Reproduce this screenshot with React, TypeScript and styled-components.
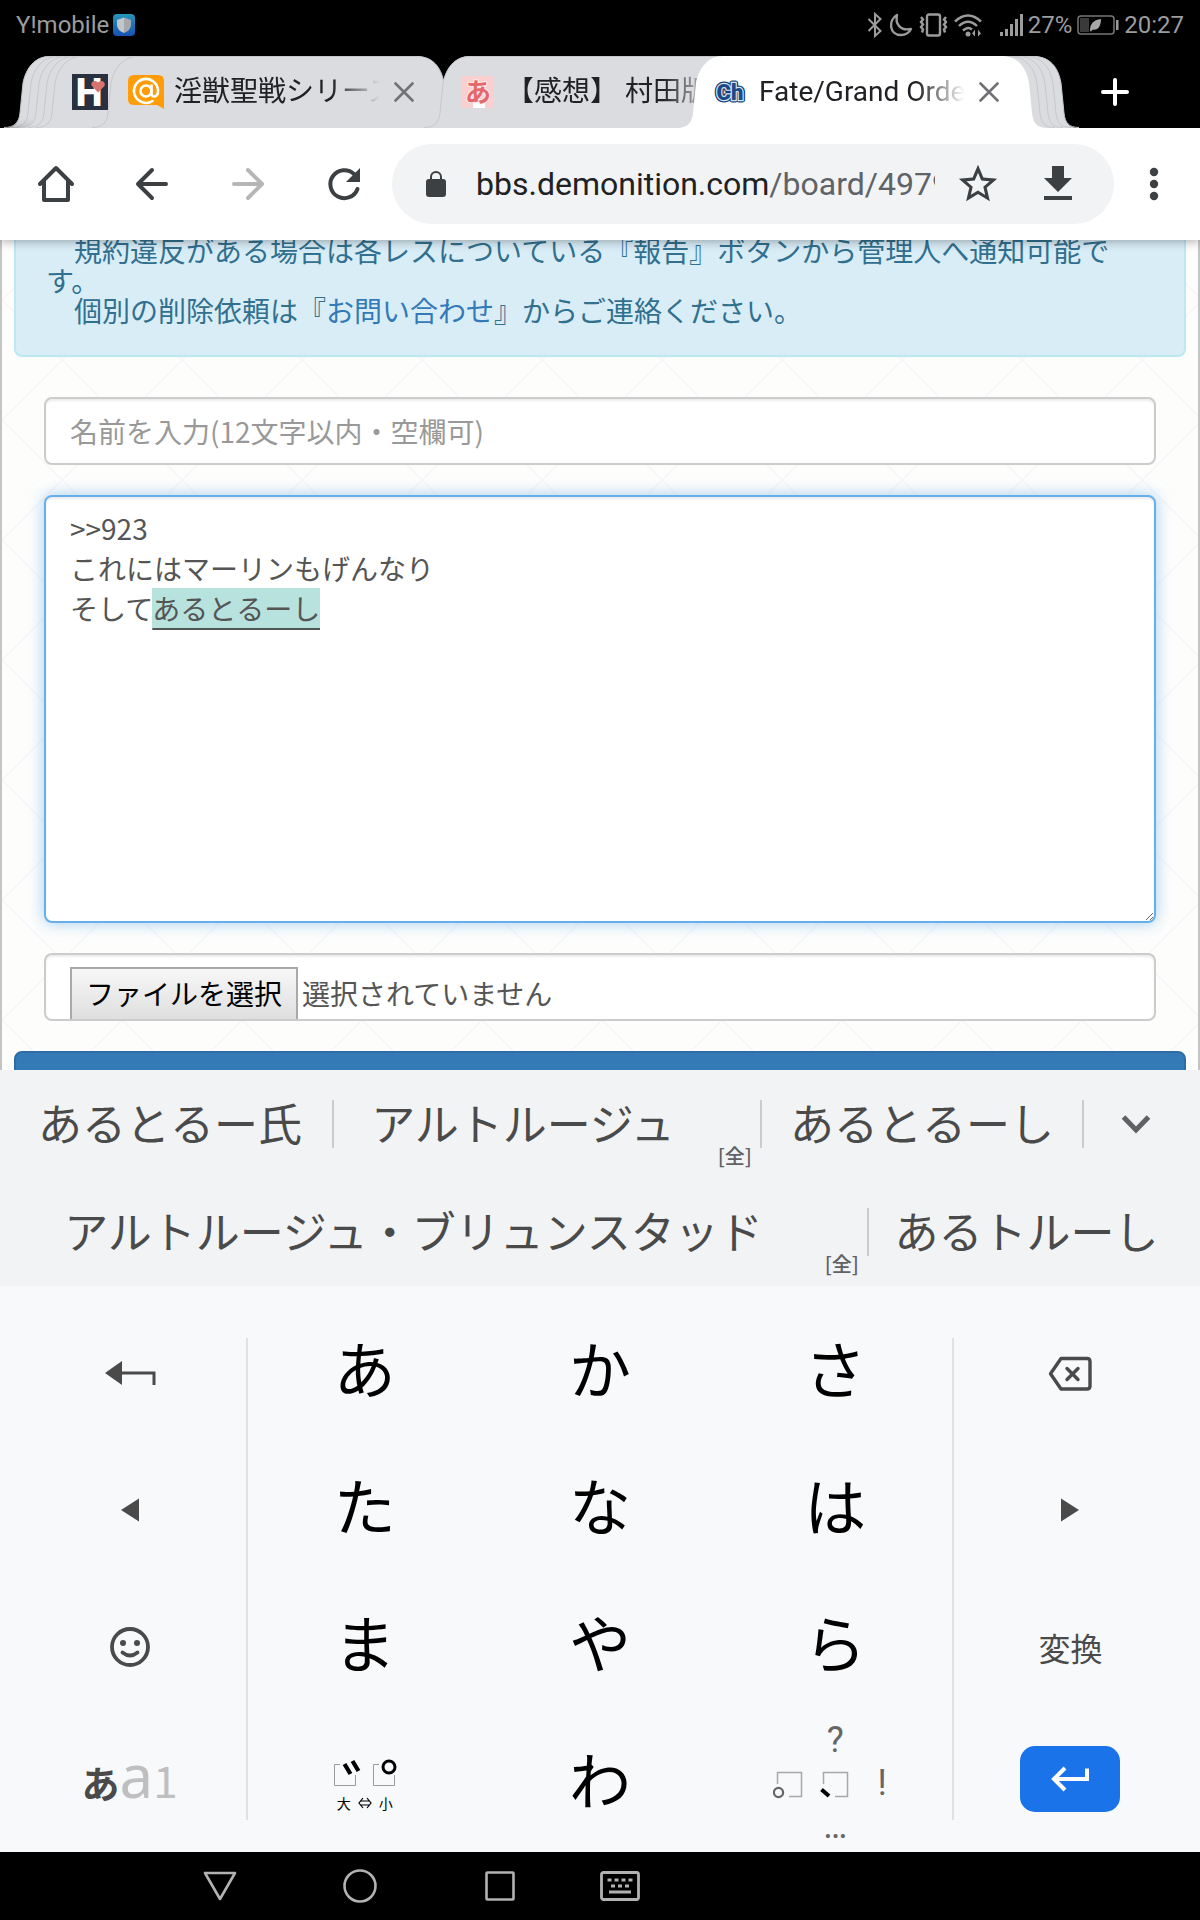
import React, { useEffect, useRef } from "react";
import styled, { createGlobalStyle, css } from "styled-components";

const GlobalStyle = createGlobalStyle`
  * { box-sizing: border-box; }
  body { margin: 0; background: #000; }
  button { border: 0; padding: 0; margin: 0; background: none; font: inherit; color: inherit; cursor: pointer; }
  svg { display: block; flex: none; }
`;

const ui = `Roboto, "Noto Sans CJK JP", sans-serif`;
const jp = `"Noto Sans CJK JP", sans-serif`;

const Screen = styled.div`
  display: flex;
  flex-direction: column;
  height: 100vh;
  overflow: hidden;
  font-family: ${ui};
`;

/* ---------- status bar ---------- */

const StatusBar = styled.header`
  display: flex;
  align-items: center;
  justify-content: space-between;
  flex: none;
  height: 56px;
  padding: 0 16px 6px;
  background: #000;
  color: #9c9c9c;
  font-size: 24px;
  line-height: 28px;
`;

const StatusGroup = styled.div<{ $gap: number }>`
  display: flex;
  align-items: center;
  gap: ${(p) => p.$gap}px;
`;

/* ---------- tab strip ---------- */

const TabStrip = styled.nav`
  display: flex;
  flex: none;
  height: 72px;
  padding-left: 4px;
  background: #000;
  overflow: hidden;
`;

const TabBox = styled.div<{ $step: number; $layer: number }>`
  position: relative;
  z-index: ${(p) => p.$layer};
  display: flex;
  align-items: center;
  flex: none;
  width: 370px;
  margin-right: ${(p) => p.$step - 370}px;
  padding: 0 38px 0 36px;
`;

const TabShape = styled.span<{ $active?: boolean }>`
  position: absolute;
  inset: 0;
  z-index: -1;
  display: flex;
  color: ${(p) => (p.$active ? "#fff" : "#dbdce0")};
`;

const TabFill = styled.span<{ $active?: boolean }>`
  flex: 1;
  background: currentColor;
  border-top: 1px solid ${(p) => (p.$active ? "#fff" : "#c6c8cb")};
`;

const TabTitle = styled.button`
  display: flex;
  align-items: center;
  flex: 1;
  min-width: 0;
  height: 72px;
  gap: 10px;
  color: #202124;
  font-size: 28px;
  line-height: 40px;
  text-align: left;
`;

const TabText = styled.span`
  flex: 1;
  overflow: hidden;
  white-space: pre;
  mask-image: linear-gradient(90deg, #000 75%, transparent 98%);
`;

const CloseButton = styled.button`
  display: flex;
  align-items: center;
  justify-content: center;
  width: 40px;
  height: 48px;
`;

const NewTab = styled.button<{ $layer: number }>`
  position: relative;
  z-index: ${(p) => p.$layer};
  display: flex;
  align-items: center;
  justify-content: center;
  flex: none;
  width: 72px;
  height: 72px;
`;

const LeftCap = ({ active }: { active?: boolean }) => (
  <svg width="46" height="72" viewBox="0 0 46 72">
    <path d="M0 72C10 72 15 67 16 57L19 27C22 12 31 0 46 0V72Z" fill="currentColor" />
    {!active && <path d="M0 71.5C10 71.5 15 67 16 57L19 27C22 12 31 .5 46 .5" fill="none" stroke="#c6c8cc" />}
  </svg>
);

const RightCap = ({ active }: { active?: boolean }) => (
  <svg width="46" height="72" viewBox="0 0 46 72">
    <path d="M46 72C36 72 32 67 31 57L28 27C25 10 16 0 0 0V72Z" fill="currentColor" />
    {!active && <path d="M46 71.5C36 71.5 32 67 31 57L28 27C25 10 16 .5 0 .5" fill="none" stroke="#c6c8cc" />}
  </svg>
);

type TabProps = {
  step: number;
  layer: number;
  active?: boolean;
  icon?: React.ReactNode;
  title?: string;
  closable?: boolean;
};

const Tab = ({ step, layer, active, icon, title, closable }: TabProps) => (
  <TabBox $step={step} $layer={layer}>
    <TabShape $active={active}>
      <LeftCap active={active} />
      <TabFill $active={active} />
      <RightCap active={active} />
    </TabShape>
    {icon && (
      <TabTitle type="button">
        {icon}
        {title && <TabText>{title}</TabText>}
      </TabTitle>
    )}
    {closable && (
      <CloseButton type="button" aria-label="タブを閉じる">
        <svg width="20" height="20" viewBox="0 0 20 20" fill="none" stroke="#707276" strokeWidth="2.6" strokeLinecap="round">
          <path d="M1.5 1.5l17 17M18.5 1.5l-17 17" />
        </svg>
      </CloseButton>
    )}
  </TabBox>
);

const HIcon = () => (
  <svg width="36" height="36" viewBox="0 0 36 36">
    <rect width="36" height="36" fill="#29303f" />
    <text x="17" y="31.5" textAnchor="middle" fontFamily="Roboto, sans-serif" fontWeight="900" fontSize="38" fill="#fff">H</text>
    <path d="M26 18.5l-6-6.5c-2-3 1.500-7.500 6-3.500 4.500-4 8 .5 6.500 3.500z" fill="#d9736f" />
  </svg>
);

const AtIcon = () => (
  <svg width="36" height="34" viewBox="0 0 36 34">
    <path d="M6 0H30q6 0 6 6V34L29 30H6q-6 0-6-6V6Q0 0 6 0Z" fill="#ff9c08" />
    <g fill="none" stroke="#fff" strokeWidth="2.6" strokeLinecap="round">
      <circle cx="18" cy="16" r="5.5" />
      <path d="M23.5 10.500V18.500c0 4.500 6.500 4 6.500-2.500A12 12 0 1 0 24.500 26" />
    </g>
  </svg>
);

const KanaIcon = () => (
  <svg width="36" height="36" viewBox="0 0 36 36">
    <rect x="2" y="2" width="32" height="32" fill="#f9cfcf" />
    <path d="M13 34V25h12v9z" fill="#fff" />
    <text x="18" y="28" textAnchor="middle" fontFamily="Noto Sans CJK JP, sans-serif" fontWeight="700" fontSize="26" fill="#e4676b" stroke="#fdeaea" strokeWidth="2" paintOrder="stroke">あ</text>
  </svg>
);

const ChIcon = () => (
  <svg width="36" height="28" viewBox="0 0 36 28">
    <text x="17" y="22" textAnchor="middle" fontFamily="Roboto, sans-serif" fontWeight="900" fontSize="22" fill="#123f78" stroke="#123f78" strokeWidth="5" strokeLinejoin="round" paintOrder="stroke">Ch</text>
    <text x="17" y="22" textAnchor="middle" fontFamily="Roboto, sans-serif" fontWeight="900" fontSize="22" fill="#1b4a86" stroke="#d5e6f7" strokeWidth="2.4" paintOrder="stroke">Ch</text>
  </svg>
);

/* ---------- browser toolbar ---------- */

const Toolbar = styled.div`
  position: relative;
  z-index: 2;
  display: flex;
  align-items: center;
  flex: none;
  height: 112px;
  padding: 0 6px 0 8px;
  background: #fff;
  box-shadow: 0 1px 10px rgba(0, 0, 0, 0.35);
`;

const ToolButton = styled.button<{ $width: number }>`
  display: flex;
  align-items: center;
  justify-content: center;
  flex: none;
  width: ${(p) => p.$width}px;
  height: 80px;
  color: #3c4043;
`;

const AddressBar = styled.div`
  display: flex;
  align-items: center;
  flex: 1;
  min-width: 0;
  height: 80px;
  padding: 0 16px 0 34px;
  border-radius: 40px;
  background: #f1f3f4;
`;

const Address = styled.div`
  display: flex;
  align-items: center;
  flex: 1;
  gap: 30px;
  min-width: 0;
  color: #3c4043;
`;

const Url = styled.span`
  flex: 1;
  overflow: hidden;
  margin-right: 3px;
  color: #5f6368;
  font-size: 32px;
  line-height: 44px;
  white-space: nowrap;

  b {
    color: #202124;
    font-weight: 400;
  }
`;

/* ---------- page ---------- */

const Page = styled.main`
  flex: 1;
  min-height: 0;
  overflow: hidden;
  padding: 0 12px;
  border: solid #c4c4c4;
  border-width: 0 2px;
  background-color: #fdfdfc;
  background-image: linear-gradient(45deg, transparent 49.5%, #f8f8fa 49.5% 50.5%, transparent 50.5%),
    linear-gradient(-45deg, transparent 49.5%, #f8f8fa 49.5% 50.5%, transparent 50.5%);
  background-size: 120px 120px;
  background-position: 0 60px;
  font-family: ${jp};
  font-size: 28px;
`;

const Notice = styled.p`
  margin: -37px 0 40px;
  padding: 30px;
  border: 2px solid #bce8f1;
  border-radius: 8px;
  background: #d9edf7;
  color: #31708f;
  line-height: 30px;

  a {
    color: #337ab7;
    text-decoration: none;
  }
`;

const Form = styled.form`
  display: flex;
  flex-direction: column;
  gap: 30px;
`;

const control = css`
  display: block;
  margin: 0 30px;
  padding: 12px 24px;
  border: 2px solid #ccc;
  border-radius: 8px;
  background: #fff;
  box-shadow: inset 0 2px 2px rgba(0, 0, 0, 0.075);
  color: #555;
  font-family: inherit;
  font-size: 28px;
  line-height: 40px;
  outline: 0;
`;

const NameInput = styled.input`
  ${control}
  height: 68px;

  &::placeholder {
    color: #999;
    opacity: 1;
  }
`;

const Comment = styled.textarea`
  ${control}
  height: 428px;
  padding-top: 11px;
  border-color: #66afe9;
  box-shadow: inset 0 2px 2px rgba(0, 0, 0, 0.075), 0 0 16px rgba(102, 175, 233, 0.6);
  caret-color: transparent;

  &::selection {
    background: rgba(183, 226, 221, 0.996);
    color: #555;
    text-decoration: underline 2px #4f5554;
    text-underline-offset: 8px;
  }
`;

const FileField = styled.div`
  ${control}
  display: flex;
  align-items: flex-start;
  gap: 4px;
  height: 68px;
  overflow: hidden;
`;

const HiddenFile = styled.input`
  position: absolute;
  width: 1px;
  height: 1px;
  opacity: 0;
`;

const FileButton = styled.label`
  flex: none;
  padding: 4px 14px 12px;
  border: 2px solid #a9a9a9;
  background: linear-gradient(#f7f7f7, #dcdcdc);
  color: #000;
`;

const FileStatus = styled.span`
  padding: 6px 0;
`;

const Submit = styled.button`
  height: 68px;
  border: 2px solid #2e6da4;
  border-radius: 8px;
  background: #337ab7;
  color: #fff;
`;

/* ---------- candidates ---------- */

const Candidates = styled.section`
  flex: none;
  background: #f1f3f5;
  color: #4a4a4a;
  font-family: ${jp};
  font-size: 44px;
  line-height: 64px;
`;

const CandidateRow = styled.div<{ $end: number }>`
  display: flex;
  align-items: center;
  height: 108px;
  padding: 0 ${(p) => p.$end}px 0 8px;
`;

const Candidate = styled.button<{ $grow: number }>`
  display: flex;
  align-items: center;
  flex: ${(p) => p.$grow} 1 0;
  min-width: 0;
  height: 108px;
  padding-bottom: 4px;
  white-space: nowrap;
`;

const CandidateText = styled.span`
  flex: 1;
  text-align: center;
`;

const WidthTag = styled.small`
  align-self: flex-end;
  width: 48px;
  padding: 0 8px 4px 0;
  font-size: 20px;
  font-weight: 500;
  line-height: 28px;
  text-align: right;
  color: #606164;
`;

const Bar = styled.i`
  flex: none;
  width: 2px;
  height: 48px;
  background: #c9cbcd;
`;

const Expand = styled.button`
  display: flex;
  align-items: center;
  justify-content: center;
  flex: 104 1 0;
  height: 108px;
`;

/* ---------- keyboard ---------- */

const Keyboard = styled.section`
  display: flex;
  flex: none;
  padding: 18px 12px 0;
  background: #f8f9fb;
  color: #4a4a4a;
  font-family: ${jp};
`;

const KeyColumn = styled.div`
  flex: 1;
  min-width: 0;
`;

const KeyGrid = styled.div`
  display: grid;
  grid-template-columns: repeat(3, 1fr);
  flex: 3;
  min-width: 0;
`;

const KeyDivider = styled.i`
  flex: none;
  width: 2px;
  margin: 34px -1px 32px;
  background: #dfe1e4;
`;

const Key = styled.button`
  display: flex;
  flex-direction: column;
  align-items: center;
  justify-content: center;
  width: 100%;
  height: 137px;
  font-size: 32px;
  line-height: 48px;
`;

const KanaKey = styled(Key)`
  padding-bottom: 12px;
  color: #000;
  font-size: 62px;
  line-height: 88px;
`;

const RaisedKey = styled(Key)`
  padding-bottom: 10px;
`;

const EnterFace = styled.span`
  display: flex;
  align-items: center;
  justify-content: center;
  width: 100px;
  height: 66px;
  border-radius: 15px;
  background: #1a73e8;
`;

const ModeLabel = styled.span`
  display: flex;
  align-items: baseline;
  color: #bfbfbf;
  font-size: 44px;
  line-height: 60px;

  b {
    color: #4a4a4a;
    font-size: 38px;
  }

  span {
    font-family: "Noto Sans", sans-serif;
    font-size: 60px;
  }
`;

const SizeHint = styled.span`
  display: flex;
  align-items: center;
  gap: 7px;
  margin-top: 6px;
  color: #000;
  font-size: 14px;
  line-height: 20px;
`;

const MarkKey = styled(Key)`
  padding-top: 4px;
`;

const PunctGrid = styled.span`
  display: grid;
  grid-template-columns: repeat(3, 47px);
  grid-auto-rows: 43px;
  align-items: center;
  justify-items: center;
  color: #666;
  font-family: ${ui};
  font-size: 36px;
  line-height: 43px;
`;

/* ---------- navigation bar ---------- */

const NavBar = styled.footer`
  display: flex;
  align-items: center;
  flex: none;
  height: 68px;
  padding-left: 12.5%;
  background: #000;
`;

const NavButton = styled.button<{ $width: number }>`
  display: flex;
  align-items: center;
  justify-content: center;
  width: ${(p) => p.$width}px;
  height: 68px;
  color: #b2b2b2;
`;

const StatusIcons = () => (
  <StatusGroup $gap={6}>
    <svg width="16" height="26" viewBox="0 0 16 26" fill="none" stroke="currentColor" strokeWidth="2">
      <path d="M1.5 7l12 12L8 24V2l5.500 5L1.500 19" />
    </svg>
    <svg width="24" height="26" viewBox="0 0 24 26" fill="none" stroke="currentColor" strokeWidth="2.4" strokeLinejoin="round">
      <path d="M8 3C-1 8 0 23 12 23c5 0 8-2 10-6C11 19 6 12 8 3Z" />
    </svg>
    <svg width="29" height="26" viewBox="0 0 29 26" fill="none" stroke="currentColor" strokeWidth="2.4">
      <rect x="8" y="2.5" width="13" height="21" rx="2" />
      <path d="M2 5l2 2.500-2 2.500 2 2.500-2 2.500 2 2.500-1 3M27 5l-2 2.500 2 2.500-2 2.500 2 2.500-2 2.500 1 3" />
    </svg>
    <svg width="28" height="26" viewBox="0 0 28 26" fill="none" stroke="currentColor" strokeWidth="2.4">
      <path d="M1 9.500Q14-2.500 27 9.500M5 14q9-8.500 18 0M9 18.500q5-4.500 9-1" />
      <circle cx="14" cy="22" r="2.5" fill="currentColor" stroke="none" />
      <path d="M18 21.500l3-4v7zM27 21.500l-3-4v7z" fill="currentColor" stroke="none" />
    </svg>
  </StatusGroup>
);

const App = () => {
  const comment = useRef<HTMLTextAreaElement>(null);
  const text = ">>923\nこれにはマーリンもげんなり\nそしてあるとるーし";

  // The uncommitted part of the input stays selected while candidates show.
  useEffect(() => {
    const el = comment.current;
    if (!el) return;
    el.focus({ preventScroll: true });
    el.setSelectionRange(text.length - 6, text.length);
  }, []);

  return (
    <Screen>
      <GlobalStyle />
      <StatusBar>
        <StatusGroup $gap={4}>
          Y!mobile
          <svg width="22" height="22" viewBox="0 0 22 22">
            <defs>
              <linearGradient id="shield" x2="0" y2="1">
                <stop stopColor="#2795b8" />
                <stop offset="1" stopColor="#1552b4" />
              </linearGradient>
            </defs>
            <rect width="22" height="22" rx="4" fill="url(#shield)" />
            <path d="M11 3.500l7 2.500v5q0 5-7 8z" fill="#a5a9ae" />
            <path d="M11 3.500L4 6v5q0 5 7 8z" fill="#c3c7ca" />
          </svg>
        </StatusGroup>
        <StatusGroup $gap={5}>
          <StatusIcons />
          <svg width="36" height="26" viewBox="0 0 36 26" fill="currentColor">
            <path d="M13 20h3v4h-3zM18 17h3v7h-3zM23 12h3v12h-3zM28 7h3v17h-3zM33 2h3v22h-3z" />
          </svg>
          <span>27%</span>
          <svg width="42" height="22" viewBox="0 0 42 22">
            <rect x="1" y="2" width="36" height="18" rx="3" fill="none" stroke="#777" strokeWidth="1.5" />
            <rect x="3" y="4" width="9" height="14" fill="#3a3a3a" />
            <rect x="39" y="6" width="2.5" height="10" fill="#9c9c9c" />
            <path d="M13 17C13 10 16 6 24 5c0 7-3 12-9 10.500L22 8 14 17.500Z" fill="#a8a8a8" />
          </svg>
          <span>20:27</span>
        </StatusGroup>
      </StatusBar>

      <TabStrip>
        <Tab step={8} layer={1} />
        <Tab step={8} layer={2} />
        <Tab step={8} layer={3} />
        <Tab step={8} layer={4} />
        <Tab step={56} layer={5} icon={<HIcon />} />
        <Tab step={332} layer={6} icon={<AtIcon />} title="淫獣聖戦シリーズ" closable />
        <Tab step={253} layer={7} icon={<KanaIcon />} title="【感想】 村田版" closable />
        <Tab step={8} layer={12} active icon={<ChIcon />} title="Fate/Grand Order" closable />
        <Tab step={8} layer={11} />
        <Tab step={8} layer={10} />
        <Tab step={8} layer={9} />
        <Tab step={370} layer={8} />
        <NewTab type="button" aria-label="新しいタブ" $layer={12}>
          <svg width="28" height="28" viewBox="0 0 28 28" stroke="#fff" strokeWidth="4" strokeLinecap="round">
            <path d="M14 2v24M2 14h24" />
          </svg>
        </NewTab>
      </TabStrip>

      <Toolbar>
        <ToolButton type="button" $width={96} aria-label="ホーム">
          <svg width="40" height="40" viewBox="0 0 40 40" fill="none" stroke="currentColor" strokeWidth="4" strokeLinejoin="round" strokeLinecap="round">
            <path d="M4 20L20 4l16 16M8 17v19h24V17" />
          </svg>
        </ToolButton>
        <ToolButton type="button" $width={96} aria-label="戻る">
          <svg width="40" height="40" viewBox="0 0 40 40" fill="none" stroke="currentColor" strokeWidth="4" strokeLinejoin="round" strokeLinecap="round">
            <path d="M20 6L6 20l14 14M6 20h28" />
          </svg>
        </ToolButton>
        <ToolButton type="button" $width={96} aria-label="進む" disabled>
          <svg width="40" height="40" viewBox="0 0 40 40" fill="none" stroke="#b4b6b8" strokeWidth="4" strokeLinejoin="round" strokeLinecap="round">
            <path d="M20 6l14 14-14 14M34 20H6" />
          </svg>
        </ToolButton>
        <ToolButton type="button" $width={96} aria-label="再読み込み">
          <svg width="40" height="40" viewBox="0 0 40 40">
            <path d="M33.5 25A14 14 0 1 1 30 10" fill="none" stroke="currentColor" strokeWidth="4" strokeLinecap="round" />
            <path d="M36 4v14H22z" fill="currentColor" />
          </svg>
        </ToolButton>
        <AddressBar>
          <Address>
            <svg width="20" height="26" viewBox="0 0 20 26">
              <rect y="8" width="20" height="18" rx="3" fill="currentColor" />
              <path d="M5 9V6a5 5 0 0 1 10 0v3" fill="none" stroke="currentColor" strokeWidth="2" />
            </svg>
            <Url>
              <b>bbs.demonition.com</b>/board/4979
            </Url>
          </Address>
          <ToolButton type="button" $width={80} aria-label="ブックマーク">
            <svg width="46" height="46" viewBox="0 0 24 24" fill="currentColor">
              <path d="M22 9.240l-7.190-.62L12 2 9.190 8.630 2 9.240l5.460 4.730L5.820 21 12 17.270 18.180 21l-1.630-7.030L22 9.240zM12 15.400l-3.760 2.270 1-4.280-3.320-2.880 4.380-.38L12 6.100l1.710 4.040 4.380.38-3.320 2.880 1 4.280L12 15.400z" />
            </svg>
          </ToolButton>
          <ToolButton type="button" $width={80} aria-label="ダウンロード">
            <svg width="48" height="48" viewBox="0 0 24 24" fill="currentColor">
              <path d="M19 9h-4V3H9v6H5l7 7 7-7zM5 18v2h14v-2H5z" />
            </svg>
          </ToolButton>
        </AddressBar>
        <ToolButton type="button" $width={80} aria-label="メニュー">
          <svg width="10" height="34" viewBox="0 0 10 34" fill="currentColor">
            <circle cx="5" cy="5" r="4.2" />
            <circle cx="5" cy="17" r="4.2" />
            <circle cx="5" cy="29" r="4.2" />
          </svg>
        </ToolButton>
      </Toolbar>

      <Page>
        <Notice>
          {"\u3000"}規約違反がある場合は各レスについている『報告』ボタンから管理人へ通知可能です。
          <br />
          {"\u3000"}個別の削除依頼は『<a href="#contact">お問い合わせ</a>』からご連絡ください。
        </Notice>
        <Form>
          <NameInput aria-label="名前" placeholder="名前を入力(12文字以内・空欄可)" />
          <Comment ref={comment} aria-label="コメント" defaultValue={text} spellCheck={false} />
          <FileField>
            <HiddenFile type="file" id="attachment" />
            <FileButton htmlFor="attachment">ファイルを選択</FileButton>
            <FileStatus>選択されていません</FileStatus>
          </FileField>
          <Submit type="button" aria-label="送信" />
        </Form>
      </Page>

      <Candidates>
        <CandidateRow $end={12}>
          <Candidate type="button" $grow={324}>
            <CandidateText>あるとるー氏</CandidateText>
          </Candidate>
          <Bar />
          <Candidate type="button" $grow={426}>
            <CandidateText>アルトルージュ</CandidateText>
            <WidthTag>[全]</WidthTag>
          </Candidate>
          <Bar />
          <Candidate type="button" $grow={320}>
            <CandidateText>あるとるーし</CandidateText>
          </Candidate>
          <Bar />
          <Expand type="button" aria-label="候補を展開">
            <svg width="30" height="22" viewBox="0 0 30 22" fill="none" stroke="#606164" strokeWidth="5">
              <path d="M2.5 4L15 17 27.500 4" />
            </svg>
          </Expand>
        </CandidateRow>
        <CandidateRow $end={16}>
          <Candidate type="button" $grow={859}>
            <CandidateText>アルトルージュ・ブリュンスタッド</CandidateText>
            <WidthTag>[全]</WidthTag>
          </Candidate>
          <Bar />
          <Candidate type="button" $grow={315}>
            <CandidateText>あるトルーし</CandidateText>
          </Candidate>
        </CandidateRow>
      </Candidates>

      <Keyboard>
        <KeyColumn>
          <Key type="button" aria-label="前の文字">
            <svg width="52" height="24" viewBox="0 0 52 24">
              <path d="M1 12L18 0v24z" fill="#4a4a4a" />
              <path d="M17 12H50V24" fill="none" stroke="#4a4a4a" strokeWidth="3" />
            </svg>
          </Key>
          <Key type="button" aria-label="左へ">
            <svg width="18" height="24" viewBox="0 0 18 24" fill="#4a4a4a">
              <path d="M0 12L18 .5v23z" />
            </svg>
          </Key>
          <Key type="button" aria-label="絵文字">
            <svg width="42" height="42" viewBox="0 0 42 42" fill="none" stroke="#4a4a4a" strokeWidth="3.8">
              <circle cx="21" cy="21" r="18" />
              <circle cx="14" cy="17" r="3" fill="#4a4a4a" stroke="none" />
              <circle cx="28" cy="17" r="3" fill="#4a4a4a" stroke="none" />
              <path d="M13.5 26.500q7.500 6 15 0" strokeLinecap="round" />
            </svg>
          </Key>
          <RaisedKey type="button">
            <ModeLabel>
              <b>あ</b>
              <span>a</span>1
            </ModeLabel>
          </RaisedKey>
        </KeyColumn>
        <KeyDivider />
        <KeyGrid>
          {["あ", "か", "さ", "た", "な", "は", "ま", "や", "ら"].map((kana) => (
            <KanaKey type="button" key={kana}>
              {kana}
            </KanaKey>
          ))}
          <MarkKey type="button" aria-label="濁点 大 小">
            <svg width="64" height="28" viewBox="0 0 64 28" fill="none">
              <path d="M7 5.500H1.500V26.500H22.500V16M46 5.500H40.500V26.500H61.500V16" stroke="#9b9b9b" />
              <path d="M11.5 5l6 10M19.500 2l6 10" stroke="#000" strokeWidth="4.2" />
              <circle cx="56" cy="8" r="6" stroke="#000" strokeWidth="3" />
            </svg>
            <SizeHint>
              <span>大</span>
              <svg width="14" height="12" viewBox="0 0 14 12" fill="none" stroke="#000" strokeWidth="1.2">
                <path d="M5 1L1 6l4 5M9 1l4 5-4 5M3 4h8M3 8h8" />
              </svg>
              <span>小</span>
            </SizeHint>
          </MarkKey>
          <KanaKey type="button">わ</KanaKey>
          <Key type="button" aria-label="句読点">
            <PunctGrid>
              <span />
              <span>?</span>
              <span />
              <svg width="30" height="32" viewBox="0 0 30 32" fill="none">
                <path d="M4.5 16V4.500H28.500V28.500H16" stroke="#a8a8a8" strokeWidth="1.5" />
                <circle cx="5.5" cy="24.5" r="4.6" stroke="#666" strokeWidth="2.2" />
              </svg>
              <svg width="30" height="32" viewBox="0 0 30 32" fill="none">
                <path d="M3.5 16V4.500H27.500V28.500H15" stroke="#a8a8a8" strokeWidth="1.5" />
                <path d="M1.5 21.500l7.500 6.500" stroke="#000" strokeWidth="4" />
              </svg>
              <span>!</span>
              <span />
              <span>…</span>
            </PunctGrid>
          </Key>
        </KeyGrid>
        <KeyDivider />
        <KeyColumn>
          <Key type="button" aria-label="削除">
            <svg width="44" height="36" viewBox="0 0 44 36" fill="none" stroke="#4a4a4a" strokeWidth="3.4" strokeLinejoin="round" strokeLinecap="round">
              <path d="M13 3.500H39q3 0 3 3V31q0 3-3 3H13L2.500 18.750Z" />
              <path d="M19 13.500l11 11M30 13.500l-11 11" />
            </svg>
          </Key>
          <Key type="button" aria-label="右へ">
            <svg width="18" height="24" viewBox="0 0 18 24" fill="#4a4a4a">
              <path d="M18 12L0 .5v23z" />
            </svg>
          </Key>
          <Key type="button">変換</Key>
          <RaisedKey type="button" aria-label="確定">
            <EnterFace>
              <svg width="40" height="26" viewBox="0 0 40 26" fill="none" stroke="#fff" strokeWidth="4">
                <path d="M15 2L4 13l11 11M4 13H37V2.500" />
              </svg>
            </EnterFace>
          </RaisedKey>
        </KeyColumn>
      </Keyboard>

      <NavBar>
        <NavButton type="button" $width={140} aria-label="戻る">
          <svg width="34" height="30" viewBox="0 0 34 30" fill="none" stroke="currentColor" strokeWidth="2.6" strokeLinejoin="round">
            <path d="M2 2H32L17 28Z" />
          </svg>
        </NavButton>
        <NavButton type="button" $width={140} aria-label="ホーム">
          <svg width="34" height="34" viewBox="0 0 34 34" fill="none" stroke="currentColor" strokeWidth="2.6">
            <circle cx="17" cy="17" r="15.5" />
          </svg>
        </NavButton>
        <NavButton type="button" $width={140} aria-label="履歴">
          <svg width="30" height="30" viewBox="0 0 30 30" fill="none" stroke="currentColor" strokeWidth="2.6">
            <rect x="1.5" y="1.5" width="27" height="27" rx="1" />
          </svg>
        </NavButton>
        <NavButton type="button" $width={100} aria-label="キーボード">
          <svg width="40" height="30" viewBox="0 0 40 30" fill="none" stroke="currentColor" strokeWidth="2.8">
            <rect x="1.5" y="1.5" width="37" height="27" rx="2" />
            <path d="M7.5 9h4M14.500 9h4M21.500 9h4M28.500 9h4M11 15h4M18 15h4M25 15h4M9 21h22" />
          </svg>
        </NavButton>
      </NavBar>
    </Screen>
  );
};

export default App;
